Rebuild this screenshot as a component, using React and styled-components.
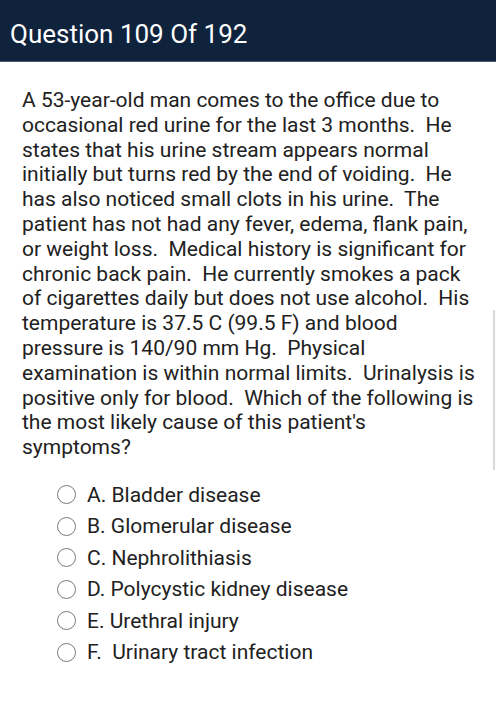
import React from "react";
import styled, { createGlobalStyle } from "styled-components";

const GlobalStyle = createGlobalStyle`
  html, body {
    margin: 0;
    padding: 0;
    background: #ffffff;
  }
  body {
    font-family: Roboto, "Noto Sans", Arial, sans-serif;
    -webkit-font-smoothing: antialiased;
  }
`;

const Page = styled.div`
  position: relative;
  width: 496px;
  min-height: 721px;
  background: #fff;
  overflow: hidden;
`;

const Header = styled.header`
  height: 62px;
  background: #0f233d;
  border-bottom: 1px solid #4b5d75;
  display: flex;
  align-items: center;
  padding: 6px 10px 0 10px;
  box-sizing: border-box;
`;

const Title = styled.h1`
  margin: 0;
  font-size: 26px;
  font-weight: 400;
  color: #ffffff;
`;

const Body = styled.main`
  padding: 26px 22px 0 22px;
`;

const Stem = styled.p`
  margin: 0;
  font-size: 21px;
  line-height: 24.8px;
  color: #212121;
  white-space: pre;
`;

const Options = styled.ul`
  list-style: none;
  margin: 23px 0 0 0;
  padding: 0 0 0 57px;
  margin-left: -22px;
  display: flex;
  flex-direction: column;
  gap: 7.5px;
`;

const Option = styled.li`
  display: flex;
  align-items: center;
  gap: 11px;
  height: 24px;
  font-size: 21px;
  color: #212121;
  white-space: pre;
`;

const Radio = styled.span`
  box-sizing: border-box;
  width: 19px;
  height: 19px;
  border: 1.6px solid #7a7a7a;
  border-radius: 50%;
  flex: none;
`;

const ScrollThumb = styled.div`
  position: absolute;
  right: 1px;
  top: 310px;
  width: 2px;
  height: 160px;
  background: #d8d8d8;
`;

const lines = [
  "A 53-year-old man comes to the office due to",
  "occasional red urine for the last 3 months.  He",
  "states that his urine stream appears normal",
  "initially but turns red by the end of voiding.  He",
  "has also noticed small clots in his urine.  The",
  "patient has not had any fever, edema, flank pain,",
  "or weight loss.  Medical history is significant for",
  "chronic back pain.  He currently smokes a pack",
  "of cigarettes daily but does not use alcohol.  His",
  "temperature is 37.5 C (99.5 F) and blood",
  "pressure is 140/90 mm Hg.  Physical",
  "examination is within normal limits.  Urinalysis is",
  "positive only for blood.  Which of the following is",
  "the most likely cause of this patient's",
  "symptoms?",
];

const choices = [
  "A. Bladder disease",
  "B. Glomerular disease",
  "C. Nephrolithiasis",
  "D. Polycystic kidney disease",
  "E. Urethral injury",
  "F.  Urinary tract infection",
];

export default function App() {
  return (
    <Page>
      <GlobalStyle />
      <Header>
        <Title>Question 109 Of 192</Title>
      </Header>
      <Body>
        <Stem>{lines.join("\n")}</Stem>
        <Options>
          {choices.map((c) => (
            <Option key={c}>
              <Radio />
              {c}
            </Option>
          ))}
        </Options>
      </Body>
      <ScrollThumb />
    </Page>
  );
}
